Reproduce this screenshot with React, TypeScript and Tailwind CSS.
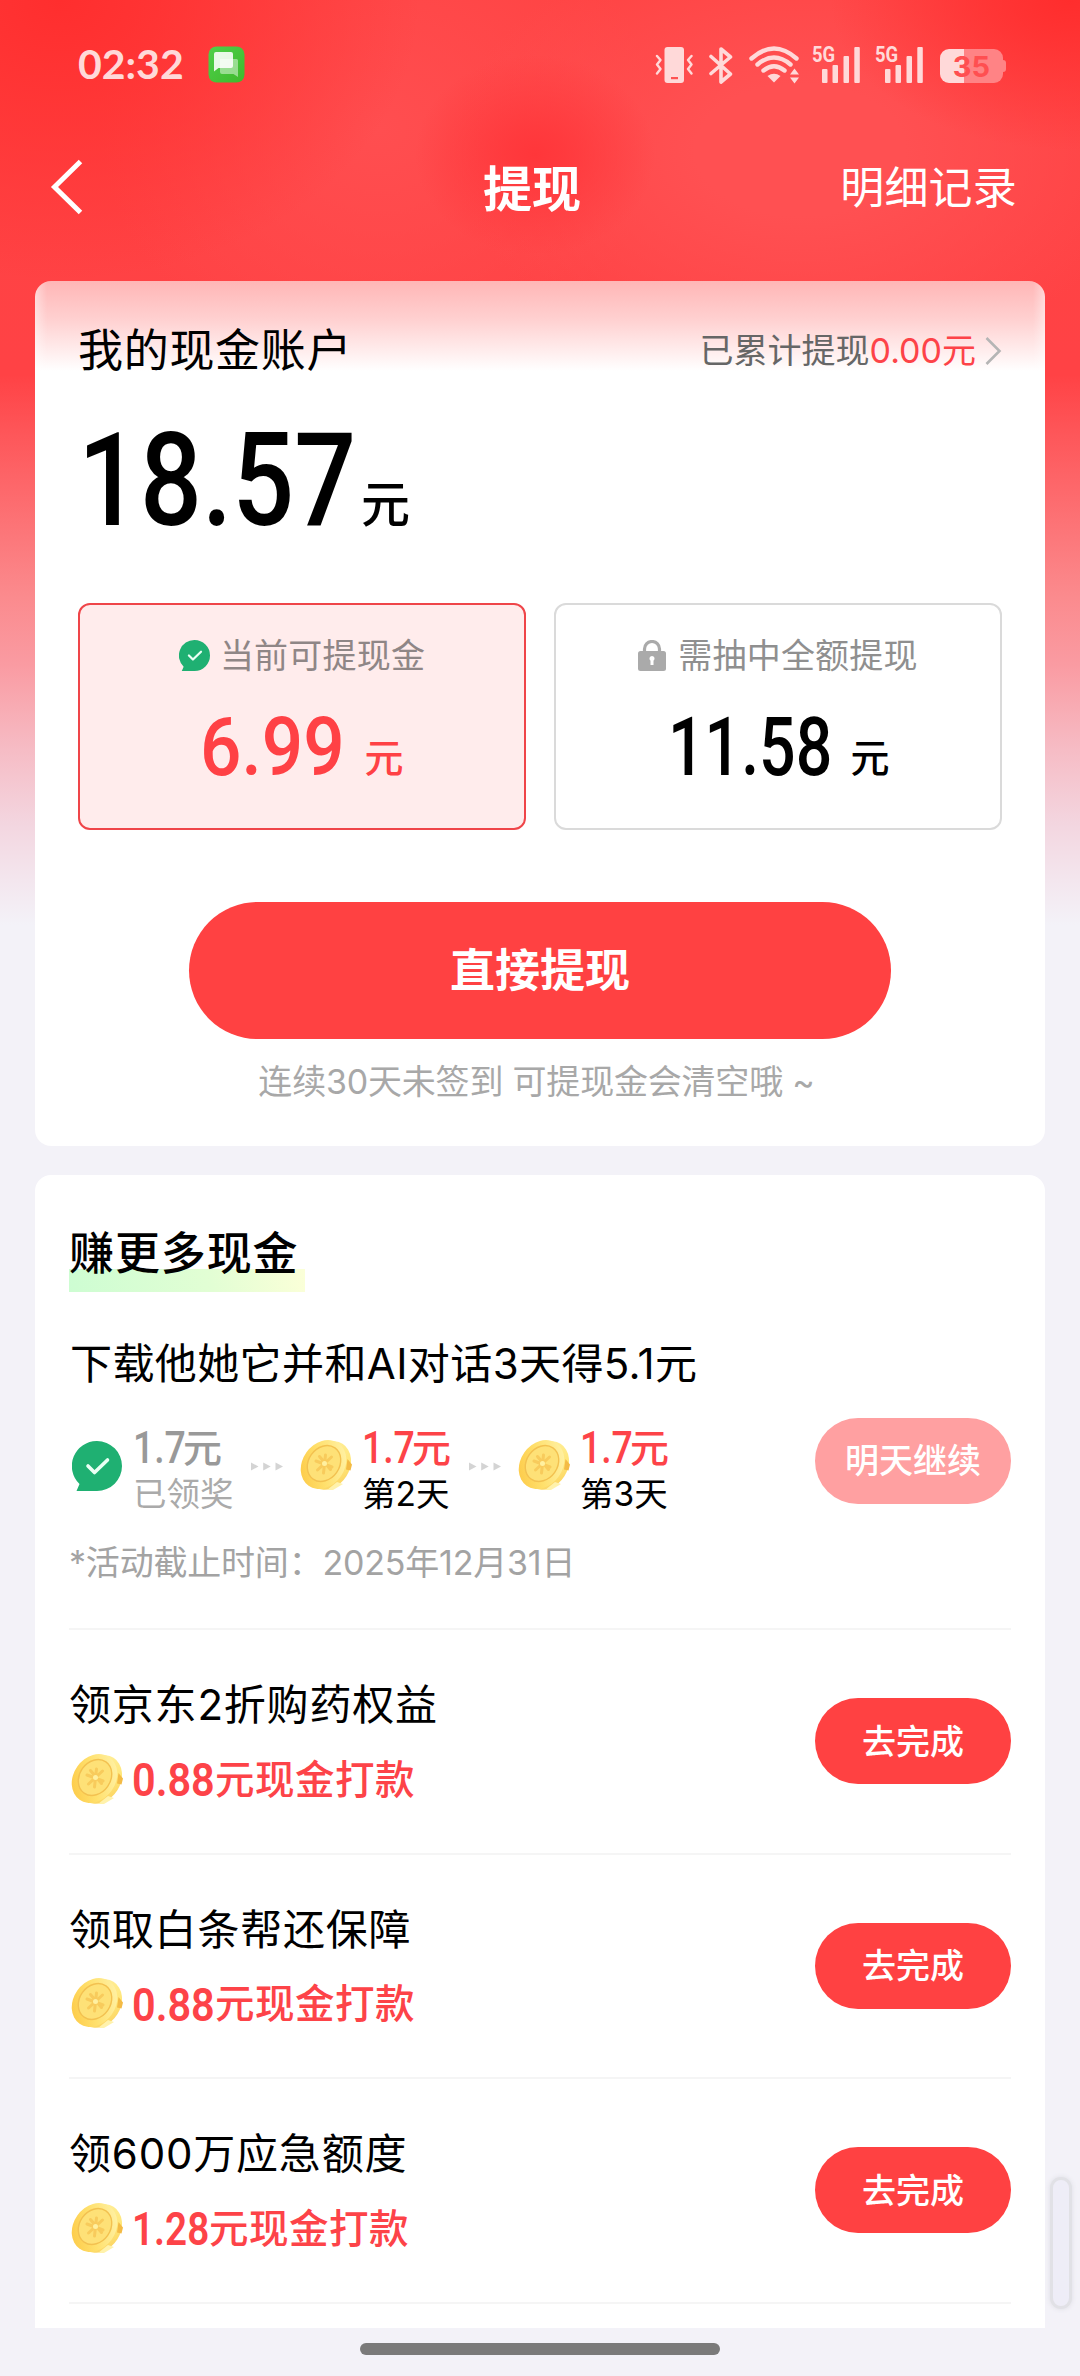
import type { ReactNode } from "react";

const SANS = "font-[Inter,'Noto_Sans_CJK_SC',sans-serif]";
const NUM = "font-[Roboto,'Noto_Sans_CJK_SC',sans-serif]";

function MessageIcon() {
  return (
    <svg width="37" height="37" viewBox="0 0 37 37">
      <defs>
        <linearGradient id="msg" x1="0" y1="0" x2="1" y2="1">
          <stop offset="0" stopColor="#4fd04a" />
          <stop offset="1" stopColor="#3fb92c" />
        </linearGradient>
      </defs>
      <rect x="0.5" y="0.5" width="36" height="36" rx="8" fill="url(#msg)" />
      <path d="M12 13h16.5a1.5 1.5 0 0 1 1.500 1.500V31l-4.500-3H14a2 2 0 0 1-2-2z" fill="#fff" opacity="0.45" />
      <path d="M8 6h15a2 2 0 0 1 2 2v12a2 2 0 0 1-2 2H10.500L6 25.500V8a2 2 0 0 1 2-2z" fill="#fff" opacity="0.88" />
    </svg>
  );
}

function VibrateIcon() {
  return (
    <svg width="38" height="38" viewBox="0 0 38 38" fill="none">
      <rect x="9.500" y="1" width="19.500" height="36" rx="3" fill="#ffd9d9" />
      <rect x="16" y="31" width="7" height="2.200" fill="#ff5252" />
      <path d="M2 10l3.500 4-3.500 4.500 3.500 4.500-3.500 4.500M36.500 10l-3.500 4 3.500 4.500-3.500 4.500 3.500 4.500" stroke="#ffd9d9" strokeWidth="2.400" strokeLinecap="round" strokeLinejoin="round" />
    </svg>
  );
}

function BluetoothIcon() {
  return (
    <svg width="24" height="38" viewBox="0 0 24 38" fill="none" stroke="#ffd9d9" strokeWidth="3.600" strokeLinecap="round" strokeLinejoin="round">
      <path d="M2 10.500L21.500 28l-9.500 8V3l9.500 8L2 27.500" />
    </svg>
  );
}

function WifiIcon() {
  return (
    <svg width="51" height="38" viewBox="0 0 51 38" fill="none">
      <g stroke="#ffd9d9" strokeWidth="4.400" strokeLinecap="round">
        <path d="M2.500 12.500Q25 -7.500 47.500 12.500" />
        <path d="M8.500 18.500Q25 4.500 41.500 18.500" />
        <path d="M14.500 24.500Q25 16 35.500 24.500" />
      </g>
      <path d="M18.500 30Q25 25.500 31.500 30L25 36.500z" fill="#ffd9d9" />
      <path d="M41 28.500h9l-4.500-6zM41 31.500h9l-4.500 6z" fill="#ffd9d9" />
    </svg>
  );
}

function Signal() {
  return (
    <div className="relative h-[38px] w-[48px]">
      <span className={`${NUM} absolute -top-px left-0 origin-left scale-x-[0.84] text-[22px] leading-[19px] font-bold text-[#ffd9d9]`}>5G</span>
      <svg width="48" height="38" viewBox="0 0 48 38" fill="#ffd9d9">
        <rect x="10" y="23" width="5.500" height="14" rx="1" />
        <rect x="20.500" y="19" width="5.500" height="18" rx="1" />
        <rect x="31.500" y="10" width="5.500" height="27" rx="1" />
        <rect x="42.300" y="1" width="5.500" height="36" rx="1" />
      </svg>
    </div>
  );
}

function Battery() {
  return (
    <div className="flex items-center pt-0.5">
      <div className="flex h-[34px] w-[63px] items-center justify-center rounded-[9px] bg-[linear-gradient(90deg,#ffd9d9_24px,#ff8385_24px)]">
        <span className="font-[Inter] text-[29px] leading-none font-bold text-[#ff4f51]">35</span>
      </div>
      <div className="h-3 w-[3px] rounded-r-sm bg-[#ff8385]" />
    </div>
  );
}

function CheckBubble({ size }: { size: number }) {
  return (
    <svg width={size} height={size} viewBox="0 0 50 50" fill="none">
      <path d="M25 0a25 25 0 1 1 0 50H4.500L7.500 43A25 25 0 0 1 25 0z" fill="#1fb072" />
      <path d="M16 25l6.500 6.500L35.500 19" stroke="#eafff4" strokeWidth="3.600" strokeLinecap="round" strokeLinejoin="round" />
    </svg>
  );
}

function LockIcon() {
  return (
    <svg width="28" height="31" viewBox="0 0 28 31" fill="none">
      <path d="M6.500 13V9a7.500 7.500 0 0 1 15 0v4" stroke="#aaa" strokeWidth="3.200" />
      <rect x="0" y="11" width="28" height="20" rx="2.500" fill="#aaa" />
      <path d="M14 16a2.600 2.600 0 0 1 1.500 4.700V25h-3v-4.300A2.600 2.600 0 0 1 14 16z" fill="#fff" />
    </svg>
  );
}

function Coin() {
  return (
    <svg width="52" height="52" viewBox="0 0 52 52" fill="none">
      <defs>
        <linearGradient id="rim" x1="0" y1="0.200" x2="1" y2="0.900">
          <stop offset="0" stopColor="#fff0a0" />
          <stop offset="0.600" stopColor="#ffe679" />
          <stop offset="1" stopColor="#fbcf5c" />
        </linearGradient>
        <linearGradient id="face" x1="0.100" y1="0.900" x2="0.800" y2="0">
          <stop offset="0" stopColor="#fdca48" />
          <stop offset="0.450" stopColor="#ffe06c" />
          <stop offset="1" stopColor="#fff2a8" />
        </linearGradient>
      </defs>
      <ellipse cx="29" cy="26.500" rx="20.500" ry="25.500" transform="rotate(32 29 26.500)" fill="url(#rim)" />
      <path d="M47.500 20l4.500 5.500-1.500 6-4.500-1z" fill="#f4bb45" />
      <path d="M37 43l6 2-10 6-6 0z" fill="#fff2ac" />
      <ellipse cx="23.500" cy="25.500" rx="21" ry="26" transform="rotate(35 23.500 25.500)" fill="url(#face)" />
      <ellipse cx="24" cy="24.500" rx="15.500" ry="19" transform="rotate(35 24 24.500)" fill="#fee177" stroke="#f3c150" strokeWidth="1.400" />
      <path d="M25.500 16l-2 18M16 22l16 6M17.500 31l14-13M19.500 17.500l11 13" stroke="#f8cb5c" strokeWidth="3" strokeLinecap="round" />
      <circle cx="24.500" cy="24.500" r="2.500" fill="#fff0a0" />
    </svg>
  );
}

function Arrows() {
  return (
    <svg width="32" height="9" viewBox="0 0 32 9" fill="#d4d4d4">
      <path d="M0 0.500L7.500 4.500L0 8.500zM12.200 0.500L19.700 4.500L12.200 8.500zM24.500 0.500L32 4.500L24.500 8.500z" />
    </svg>
  );
}

function StepLabel({ top, bottom, muted }: { top: ReactNode; bottom: string; muted?: boolean }) {
  return (
    <div className="-ml-0.5 flex flex-col pt-[7px]">
      <div className={`flex h-[45px] items-center ${muted ? "text-[#999]" : "text-[#fd4348]"}`}>{top}</div>
      <div className={`mt-0.5 flex h-[45px] items-center text-[33.500px] leading-none whitespace-nowrap ${muted ? "text-[#aaa]" : "text-black"}`}>{bottom}</div>
    </div>
  );
}

function StepAmount() {
  return (
    <div className="flex items-center gap-[3px]">
      <div className="w-[47px]">
        <span className={`${NUM} block w-[55px] origin-left scale-x-[0.83] text-[45px] leading-none font-medium`}>1.7</span>
      </div>
      <span className="text-[39px] leading-none font-medium">元</span>
    </div>
  );
}

function Task({ title, amount, amountClass }: { title: string; amount: string; amountClass: string }) {
  return (
    <div className="flex h-[224.6px] shrink-0 items-center justify-between border-b-2 border-[#f5f5f5]">
      <div className="flex flex-col gap-[25px] pt-[3px]">
        <div className="flex h-[50px] items-center text-[42px] leading-none tracking-[0.8px] whitespace-nowrap text-black">{title}</div>
        <div className="flex h-[50px] items-center pl-0.5 text-[#fd4348]">
          <div className="-mt-[3px]">
            <Coin />
          </div>
          <span className={`${NUM} ml-[9px] origin-left text-[46px] leading-none font-semibold ${amountClass}`}>{amount}</span>
          <span className="text-[39.500px] leading-none font-medium tracking-[0.5px]">元现金打款</span>
        </div>
      </div>
      <button className="flex h-[86px] w-[196px] items-center justify-center rounded-full bg-[#ff4142] pt-px text-[34px] leading-none font-medium text-white">去完成</button>
    </div>
  );
}

const PAGE_BG =
  "bg-[radial-gradient(ellipse_120px_100px_at_535px_155px,#ff363a_0%,#ff363acc_25%,#ff363a00_100%),radial-gradient(ellipse_240px_150px_at_1070px_0px,#ff2d2d_0%,#ff2d2d00_100%),radial-gradient(ellipse_360px_280px_at_60px_0px,#ff2e2e_0%,#ff2e2e00_100%),radial-gradient(ellipse_350px_220px_at_800px_150px,#ff5052_30%,#ff505200_100%),radial-gradient(ellipse_280px_240px_at_380px_130px,#ff4e50_0%,#ff4e5000_100%),linear-gradient(180deg,#ff4343_0px,#ff4245_375px,#fe5558_430px,#fb8a8d_595px,#fa9ba2_665px,#f6bcc5_750px,#f3d6e0_825px,#f3e6ee_880px,#f3f2f8_925px,#f3f2f8_2376px)]";

export default function App() {
  return (
    <div className={`${SANS} ${PAGE_BG} relative flex h-[2376px] w-[1080px] flex-col overflow-hidden`}>
      {/* Status bar */}
      <div className="flex h-[130px] items-center pr-[74px] pl-[78px]">
        <span className="-mt-1 font-[Lato] text-[41px] leading-none font-bold text-[#ffd9d9]">02:32</span>
        <div className="ml-auto flex items-center">
          <VibrateIcon />
          <div className="w-4" />
          <BluetoothIcon />
          <div className="w-4" />
          <WifiIcon />
          <div className="w-3" />
          <Signal />
          <div className="w-[15px]" />
          <Signal />
          <div className="w-[17px]" />
          <Battery />
        </div>
        <div className="absolute top-[46px] left-[208px]">
          <MessageIcon />
        </div>
      </div>

      {/* Navigation bar */}
      <div className="grid h-[114px] grid-cols-3 items-center pr-[63px] pl-[50px] text-white">
        <svg width="34" height="56" viewBox="0 0 34 56" fill="none" stroke="#fff" strokeWidth="5">
          <path d="M30.500 2.500L4.500 28L30.500 53.500" />
        </svg>
        <span className="pt-1 pr-[3px] text-center text-[49px] leading-none font-bold">提现</span>
        <span className="pt-0.5 text-right text-[44px] leading-none tracking-[0.2px] whitespace-nowrap">明细记录</span>
      </div>

      {/* Cash account card */}
      <div className="mx-[35px] mt-[37px] flex h-[865px] shrink-0 flex-col rounded-[16px] bg-[linear-gradient(90deg,#ffffff66_0px,#ffffff00_12px,#ffffff00_998px,#ffffff66_1010px),linear-gradient(180deg,#ffb6b6_0px,#ffd0d0_38px,#fff_90px)] px-[43px] pt-[39px]">
        <div className="flex h-[60px] items-center justify-between pt-px">
          <span className="text-[45px] leading-none tracking-[0.700px] text-black">我的现金账户</span>
          <div className="flex items-center text-[34px] leading-none text-[#666]">
            <span>已累计提现</span>
            <span className="text-[#fd4348]">0.00元</span>
            <svg className="ml-[9px]" width="17" height="28" viewBox="0 0 17 28" fill="none" stroke="#b5b5b5" strokeWidth="2.600">
              <path d="M1.500 1L14.500 14L1.500 27" />
            </svg>
          </div>
        </div>

        <div className="flex h-[223px] items-baseline pt-[36px] text-black">
          <span className={`${NUM} w-[283px] origin-left scale-x-[0.845] text-[129px] leading-none font-medium`}>18.57</span>
          <span className="-translate-y-[3px] text-[49px] leading-none font-medium">元</span>
        </div>

        <div className="grid grid-cols-2 gap-7">
          <div className="flex h-[227px] flex-col items-center rounded-[12px] border-2 border-[#ef4549] bg-[#ffecec] pt-[30px]">
            <div className="flex h-10 items-center gap-[10px] text-[34px] leading-none text-[#8f8686]">
              <CheckBubble size={31} />
              <span className="pt-px tracking-[0.2px]">当前可提现金</span>
            </div>
            <div className="mt-[31px] flex items-baseline text-[#ff4145]">
              <span className={`${NUM} w-[164px] origin-left scale-x-[0.89] text-[82px] leading-none font-medium`}>6.99</span>
              <span className="-translate-y-[3px] text-[39px] leading-none font-medium">元</span>
            </div>
          </div>
          <div className="flex h-[227px] flex-col items-center rounded-[12px] border-2 border-[#dadada] bg-white pt-[30px]">
            <div className="flex h-10 items-center gap-[12px] text-[34px] leading-none text-[#8f8f8f]">
              <LockIcon />
              <span className="pt-px tracking-[0.2px]">需抽中全额提现</span>
            </div>
            <div className="mt-[31px] flex items-baseline text-black">
              <span className={`${NUM} ml-0.5 w-[182px] origin-left scale-x-[0.785] text-[82px] leading-none font-medium`}>11.58</span>
              <span className="-translate-y-[3px] text-[39px] leading-none font-medium">元</span>
            </div>
          </div>
        </div>

        <button className="mt-[72px] flex h-[137px] w-[702px] shrink-0 items-center justify-center self-center rounded-full bg-[#ff4142] text-[45px] leading-none font-bold text-white">
          直接提现
        </button>
        <div className="mt-[23px] flex h-10 items-center justify-center pr-[7px] text-[34px] leading-none tracking-[-0.2px] text-[#a8a8a8]">
          连续30天未签到 可提现金会清空哦 ~
        </div>
      </div>

      {/* Earn more card */}
      <div className="mx-[35px] mt-[29px] flex h-[1153px] shrink-0 flex-col overflow-hidden rounded-t-[16px] bg-white px-[34px] pt-[53px]">
        <div className="h-16 w-[236px] bg-[linear-gradient(80deg,#cdfdd2,#e2fed4_60%,#fbffd8)] bg-[length:100%_23px] bg-bottom bg-no-repeat text-[45px] leading-[52px] font-medium tracking-[0.900px] whitespace-nowrap text-black">
          赚更多现金
        </div>
        <div className="mt-[47px] flex h-[50px] items-center pl-px text-[42px] leading-none tracking-[0.4px] whitespace-nowrap text-black">下载他她它并和AI对话3天得5.1元</div>

        <div className="mt-[29px] flex h-[100px] shrink-0 items-start">
          <div className="flex w-[182px] items-center gap-[13px] pl-[3px]">
            <div className="-mt-[3px]">
              <CheckBubble size={50} />
            </div>
            <StepLabel muted top={<StepAmount />} bottom="已领奖" />
          </div>
          <div className="pt-[44px]">
            <Arrows />
          </div>
          <div className="flex w-[168px] items-center gap-[12px] pl-[17px]">
            <div className="-mt-[5px]">
              <Coin />
            </div>
            <StepLabel top={<StepAmount />} bottom="第2天" />
          </div>
          <div className="pt-[44px] pl-[18px]">
            <Arrows />
          </div>
          <div className="flex items-center gap-[12px] pl-[17px]">
            <div className="-mt-[5px]">
              <Coin />
            </div>
            <StepLabel top={<StepAmount />} bottom="第3天" />
          </div>
          <button className="ml-auto flex h-[86px] w-[196px] items-center justify-center rounded-full bg-[#ffa0a1] text-[34px] leading-none font-medium text-white">明天继续</button>
        </div>
        <div className="mt-[25px] flex h-10 shrink-0 items-center text-[34px] leading-none tracking-[-0.200px] whitespace-nowrap text-[#a3a3a3]">*活动截止时间：2025年12月31日</div>
        <div className="mt-[45px] h-0.5 shrink-0 bg-[#f5f5f5]" />

        <Task title="领京东2折购药权益" amount="0.88" amountClass="w-[83px] scale-x-[0.9]" />
        <Task title="领取白条帮还保障" amount="0.88" amountClass="w-[83px] scale-x-[0.9]" />
        <Task title="领600万应急额度" amount="1.28" amountClass="w-[77px] scale-x-[0.84]" />
      </div>

      {/* Home indicator */}
      <div className="mt-[15px] h-3 w-[360px] shrink-0 self-center rounded-full bg-[#7a7a7a]" />

      {/* Edge handle */}
      <div className="absolute top-[2177px] left-[1050px] h-[132px] w-[22px] rounded-full border-[3px] border-[#e1e1e6] bg-[#eeedf7] shadow-[0_0_5px_#dddde4]" />
    </div>
  );
}
